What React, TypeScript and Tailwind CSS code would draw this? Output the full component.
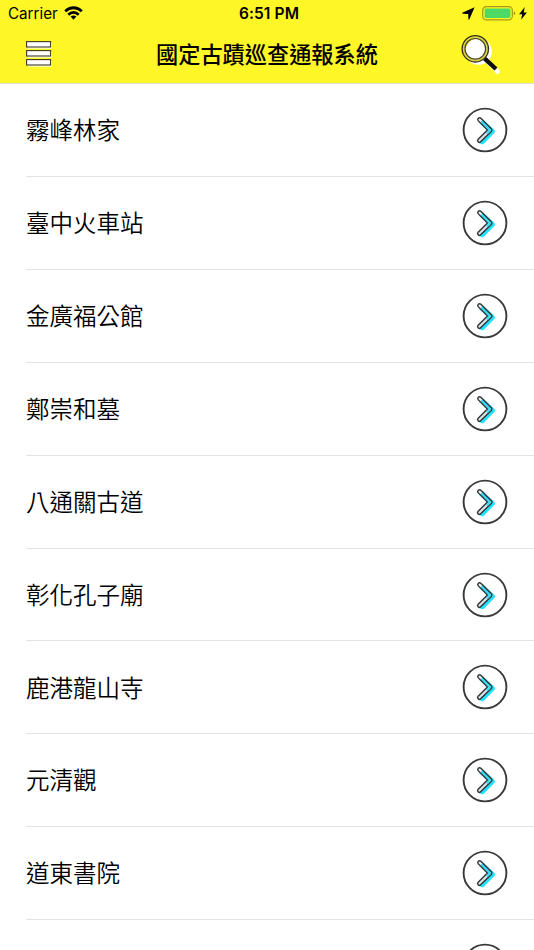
import React from "react";

const sites = [
  "霧峰林家",
  "臺中火車站",
  "金廣福公館",
  "鄭崇和墓",
  "八通關古道",
  "彰化孔子廟",
  "鹿港龍山寺",
  "元清觀",
  "道東書院",
  "",
];

const WifiIcon = () => (
  <svg width="19" height="14" viewBox="0 0 20 14" preserveAspectRatio="none" fill="none" stroke="#000" strokeWidth="2.9">
    <path d="M1.3 5.2 C6.3 .5 13.7 .5 18.7 5.2" />
    <path d="M4.5 8.7 C7.8 5.7 12.2 5.7 15.5 8.7" />
    <path d="M10 13.7 L7 10.6 C8.7 9.2 11.3 9.2 13 10.6 Z" fill="#000" stroke="none" />
  </svg>
);

const LocationIcon = () => (
  <svg width="13" height="13" viewBox="0 0 13 13">
    <path d="M12.6 .2 L7.4 12.2 Q6.7 13.2 6.4 12 L6.2 6.9 L.9 6.7 Q-.3 6.2 .8 5.6 Z" />
  </svg>
);

const BatteryIcon = () => (
  <svg width="34" height="15" viewBox="0 0 34 15">
    <rect x=".7" y=".7" width="29.6" height="13.2" rx="3.6" fill="none" stroke="#a49c16" strokeWidth="1.2" />
    <rect x="2.6" y="2.6" width="25.8" height="9.4" rx="1.4" fill="#4cd964" />
    <path d="M31.7 5.2 Q33.2 5.8 33.2 7.3 Q33.2 8.8 31.7 9.4 Z" fill="#a49c16" />
  </svg>
);

const BoltIcon = () => (
  <svg width="8" height="13" viewBox="0 0 8 13">
    <path d="M5.8 .1 L.1 7.2 H3.2 L2 12.8 L7.9 5.5 H4.6 Z" />
  </svg>
);

const MenuIcon = () => (
  <svg width="28" height="28" viewBox="0 0 28 28">
    {[0, 9, 18].map((y) => (
      <g key={y}>
        <rect x="2" y={y + 2} width="24" height="5.6" fill="#fff" />
        <rect x=".6" y={y + 0.6} width="24" height="5.4" fill="#fff" stroke="#3d3a18" strokeWidth="1.1" />
      </g>
    ))}
  </svg>
);

const SearchIcon = () => (
  <svg width="42" height="42" viewBox="0 0 42 42" fill="none">
    <circle cx="18.6" cy="17.6" r="13.2" fill="#fff" />
    <path d="M28 28 L37.7 37.6" stroke="#fff" strokeWidth="4.4" strokeLinecap="round" />
    <circle cx="15.3" cy="14.8" r="11.7" stroke="#dcd346" strokeWidth="2.4" />
    <circle cx="15.3" cy="14.8" r="13.2" stroke="#36331c" strokeWidth="1.3" />
    <circle cx="15.3" cy="14.8" r="10.3" stroke="#4a4628" strokeWidth="1.2" />
    <path d="M24.7 24.6 L36 35" stroke="#0c0c0c" strokeWidth="4.3" />
  </svg>
);

const ArrowIcon = () => (
  <svg className="shrink-0" width="46" height="46" viewBox="0 0 46 46" fill="none">
    <circle cx="23" cy="23" r="21.4" fill="#fff" stroke="#3a393c" strokeWidth="1.9" />
    <g strokeLinecap="round" strokeLinejoin="round">
      <path d="M19.6 14.6 L30.2 24.4 L20.2 34.6" stroke="#1fe2ff" strokeWidth="5.2" />
      <path d="M17.6 12.6 L28 23.1 L17.4 33.5" stroke="#333338" strokeWidth="5" />
      <path d="M28 23.1 L17.4 33.5" stroke="#d5e2e6" strokeWidth="2.2" />
      <path d="M17.6 12.6 L19.4 14.4" stroke="#e4eef0" strokeWidth="2.2" />
      <path d="M20 15 L28 23.1 L25.4 25.7" stroke="#35dcf3" strokeWidth="2.3" />
    </g>
  </svg>
);

const SiteRow = ({ name }: { name: string }) => (
  <li className="ml-[26px] flex h-[92.87px] shrink-0 items-center justify-between border-b border-[#e3e3e5] pr-[26px]">
    <span className="pt-[2px] text-[23.5px] leading-none font-[350]">{name}</span>
    <ArrowIcon />
  </li>
);

export default function App() {
  return (
    <div className="flex h-[950px] w-[534px] flex-col overflow-hidden bg-white font-['Inter','Noto_Sans_CJK_TC',sans-serif] text-black">
      <header className="h-[84.3px] shrink-0 border-b border-[#dedede] bg-[#fff627]">
        <div className="grid h-[27px] grid-cols-3 items-center pl-2 pr-[7px]">
          <div className="flex items-center gap-[6px] text-[15.2px]">
            <span className="pt-px">Carrier</span>
            <WifiIcon />
          </div>
          <span className="pt-px pl-[3px] text-center text-[15.5px] font-semibold tracking-[0.1px]">6:51 PM</span>
          <div className="flex items-center justify-end">
            <LocationIcon />
            <span className="w-[7px]" />
            <BatteryIcon />
            <span className="w-[3px]" />
            <BoltIcon />
          </div>
        </div>
        <div className="grid h-[56px] grid-cols-[1fr_auto_1fr] items-center pl-[26px] pr-[26px]">
          <MenuIcon />
          <h1 className="text-[22.2px] leading-none font-medium">國定古蹟巡查通報系統</h1>
          <div className="flex justify-end pr-[6px]">
            <SearchIcon />
          </div>
        </div>
      </header>
      <ul className="flex flex-col">
        {sites.map((name, i) => (
          <SiteRow key={i} name={name} />
        ))}
      </ul>
    </div>
  );
}
